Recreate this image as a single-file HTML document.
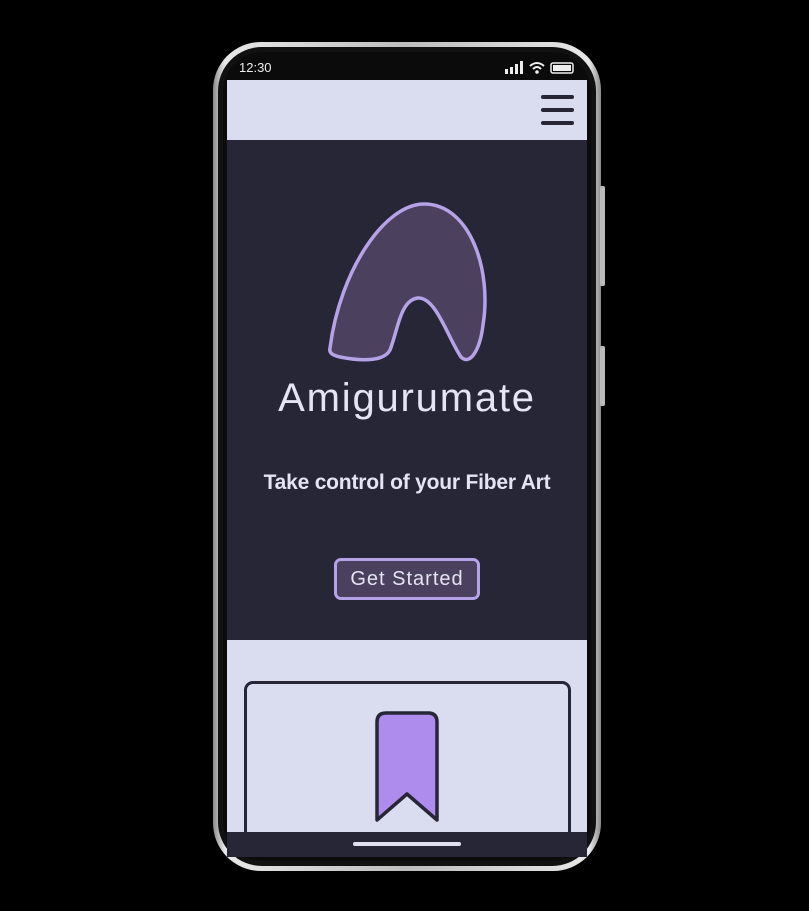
<!DOCTYPE html>
<html><head><meta charset="utf-8"><style>
*{margin:0;padding:0;box-sizing:border-box}
body{width:809px;height:911px;background:#000;position:relative;overflow:hidden;font-family:"Liberation Sans",sans-serif}
.frame{position:absolute;left:213px;top:42px;width:388px;height:829px;border-radius:48px;background:linear-gradient(90deg,#8a8a8a,#e8e8e8 3%,#bdbdbd 50%,#e8e8e8 97%,#8a8a8a);}
.inner{position:absolute;left:218px;top:47px;width:378px;height:819px;border-radius:44px;background:#111;}
.bezel{position:absolute;left:223px;top:52px;width:368px;height:809px;border-radius:40px;background:#0b0b0b;overflow:hidden}
.btn{position:absolute;left:600px;background:#bbb;width:5px;border-radius:2px}
.nav{position:absolute;left:227px;top:80px;width:360px;height:60px;background:#dadcf0}
.hero{position:absolute;left:227px;top:140px;width:360px;height:500px;background:#262636}
.sec{position:absolute;left:227px;top:640px;width:360px;height:192px;background:#dadcf0;overflow:hidden}
.card{position:absolute;left:17px;top:41px;width:327px;height:200px;border:3px solid #262636;border-radius:9px}
.bot{position:absolute;left:227px;top:832px;width:360px;height:25px;background:#262636}
.bar{position:absolute;left:353px;top:842px;width:108px;height:4px;border-radius:2px;background:#e0e0f0}
.ham{position:absolute;left:541px;width:33px;height:4px;border-radius:2px;background:#262636}
</style></head><body>
<div class="frame"></div><div class="inner"></div><div class="bezel"></div>
<div class="btn" style="top:186px;height:100px"></div>
<div class="btn" style="top:346px;height:60px"></div>
<div style="position:absolute;left:239px;top:60px;color:#eee;font-size:13px">12:30</div>
<svg style="position:absolute;left:504px;top:61px" width="72" height="14">
<rect x="1" y="8" width="3" height="5" fill="#eee"/><rect x="6" y="6" width="3" height="7" fill="#eee"/><rect x="11" y="3" width="3" height="10" fill="#eee"/><rect x="16" y="0" width="3" height="13" fill="#eee"/>
<path d="M26 5 Q33 -1 40 5" stroke="#eee" stroke-width="2" fill="none"/><path d="M29 8 Q33 4 37 8" stroke="#eee" stroke-width="2" fill="none"/><circle cx="33" cy="11" r="1.8" fill="#eee"/>
<rect x="47" y="2" width="22" height="10" rx="2" fill="none" stroke="#eee" stroke-width="1.5"/><rect x="49" y="4" width="18" height="6" fill="#eee"/>
</svg>
<div class="nav"></div>
<div class="ham" style="top:95px"></div><div class="ham" style="top:108px"></div><div class="ham" style="top:121px"></div>
<div class="hero"></div>
<svg style="position:absolute;left:0;top:0" width="809" height="911">
<path d="M330 348 C340 270 385 204 424 204 C470 204 492 270 483 325 C480 350 470 366 461 357 C448 338 436 297 418 298 C400 300 398 330 390 350 C384 362 360 361 340 357 C331 355 329 352 330 348 Z" fill="#4b405e" stroke="#b6a2e6" stroke-width="3.5"/>
</svg>
<div style="position:absolute;left:227px;top:376px;width:360px;text-align:center;color:#e4e4f4;font-size:40px;letter-spacing:1.8px;font-family:'Liberation Sans',sans-serif">Amigurumate</div>
<div style="position:absolute;left:227px;top:471px;width:360px;text-align:center;color:#e4e4f4;font-size:21px;font-weight:bold;letter-spacing:-0.2px;font-family:'Liberation Sans',sans-serif">Take control of your Fiber Art</div>
<div style="position:absolute;left:334px;top:558px;width:146px;height:42px;border:3px solid #b6a2e6;border-radius:7px;background:#4b405e;color:#e4e4f4;font-size:20px;letter-spacing:1px;text-align:center;line-height:36px">Get Started</div>
<div class="sec"><div class="card"></div></div>
<svg style="position:absolute;left:0;top:0" width="809" height="911">
<path d="M377 820 L377 722 Q377 713 386 713 L428 713 Q437 713 437 722 L437 820 L407 794 Z" fill="#ad8ced" stroke="#262636" stroke-width="3.5" stroke-linejoin="round"/>
</svg>
<div class="bot"></div><div class="bar"></div>
</body></html>
